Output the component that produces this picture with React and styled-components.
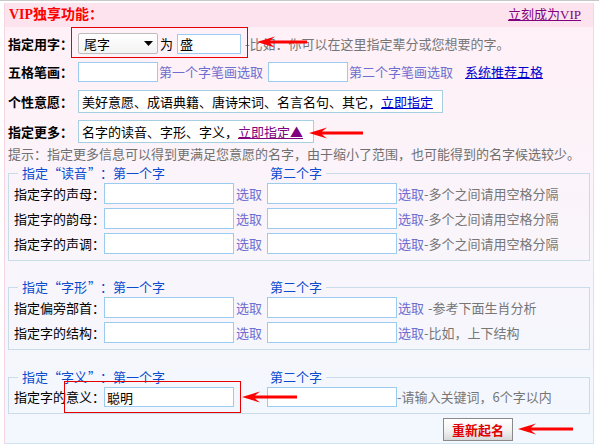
import React from 'react';
import styled, { createGlobalStyle } from 'styled-components';

const Global = createGlobalStyle`
  html, body { margin: 0; padding: 0; background: #fff; }
  body {
    font-family: "Noto Sans CJK SC", "Noto Sans", sans-serif;
    font-size: 13px;
    color: #000;
  }
  * { box-sizing: border-box; }
`;

const TopRule = styled.div`
  height: 1px;
  background: #c8c8c8;
`;

const Panel = styled.div`
  position: relative;
  margin: 2px 0 0 4px;
  width: 590px;
  height: 441px;
  border-left: 1px solid #f6d6e2;
  border-right: 1px solid #f6d6e2;
  border-bottom: 1px solid #cfe5f4;
  background: linear-gradient(180deg, #fff0f6 0%, #fbf4fa 40%, #f2f8fe 100%);
`;

const Header = styled.div`
  display: flex;
  align-items: center;
  justify-content: space-between;
  height: 24px;
  padding: 0 12px 0 4px;
  background: #fde3ed;
`;

const Title = styled.div`
  color: #f00;
  font: bold 14px/16px "Liberation Serif", "Noto Sans CJK SC", serif;
`;

const VipLink = styled.a`
  color: #800080;
  font: 13px/16px "Liberation Serif", "Noto Sans CJK SC", serif;
  text-decoration: underline;
  cursor: pointer;
`;

const TopForm = styled.div`
  padding-left: 3px;
`;

const Row = styled.div`
  display: flex;
  align-items: center;
  height: ${(p) => p.$h}px;
  margin-top: ${(p) => p.$mt}px;
  white-space: nowrap;
`;

const Label = styled.span`
  width: ${(p) => p.$w || 70}px;
  flex: none;
  font-weight: ${(p) => (p.$bold ? 'bold' : 'normal')};
  line-height: 16px;
  white-space: nowrap;
`;

const SelectBox = styled.div`
  display: flex;
  align-items: center;
  justify-content: space-between;
  width: 80px;
  height: 21px;
  padding: 0 4px 0 5px;
  border: 1px solid #bcbcbc;
  border-radius: 2px;
  background: linear-gradient(180deg, #ffffff, #f3f3f3);
  line-height: 16px;
`;

const Plain = styled.span`
  line-height: 16px;
  margin: 0 ${(p) => p.$mr || 0}px 0 ${(p) => p.$ml || 0}px;
`;

const TextInput = styled.input`
  width: ${(p) => p.$w}px;
  height: ${(p) => p.$h || 21}px;
  margin-left: ${(p) => p.$ml || 0}px;
  padding: 0 2px;
  border: 1px solid #9ccbf0;
  background: #fff;
  font: 13px/16px "Noto Sans CJK SC", sans-serif;
  color: #000;
  outline: none;
  flex: none;
`;

const Note = styled.span`
  color: #767676;
  line-height: 16px;
  margin-left: ${(p) => p.$ml || 0}px;
`;

const Pick = styled.a`
  color: #6e6ecf;
  line-height: 16px;
  margin-left: ${(p) => p.$ml || 0}px;
  cursor: pointer;
`;

const Link = styled.a`
  color: ${(p) => (p.$visited ? '#800080' : '#0000cc')};
  text-decoration: underline;
  line-height: 16px;
  margin-left: ${(p) => p.$ml || 0}px;
  cursor: pointer;
`;

const ChoiceBox = styled.div`
  display: flex;
  align-items: center;
  height: 23px;
  padding: 0 ${(p) => p.$pr}px 0 3px;
  border: 1px solid #a6cfe2;
  background: #fff;
  line-height: 16px;
`;

const Hint = styled.div`
  margin-top: 3px;
  line-height: 16px;
  color: #707070;
  white-space: nowrap;
`;

const Group = styled.fieldset`
  margin: ${(p) => p.$mt}px 3px 0 3px;
  padding: 0 0 4px 5px;
  min-width: 0;
  border: 1px solid #c9dcea;
`;

const Legend = styled.legend`
  margin-left: 4px;
  padding: 0 4px;
  color: #0a4bd0;
  line-height: 16px;
  white-space: nowrap;
`;

const LegendFirst = styled.span`
  display: inline-block;
  width: 248px;
`;

const Quote = styled.span`
  display: inline-block;
  width: 13px;
  text-align: ${(p) => (p.$open ? 'right' : 'left')};
  padding: ${(p) => (p.$open ? '0 1px 0 0' : '0 0 0 1px')};
`;

const GroupRow = styled.div`
  display: flex;
  align-items: center;
  height: ${(p) => p.$h || 25}px;
  white-space: nowrap;
`;

const ButtonRow = styled.div`
  display: flex;
  padding-left: 438px;
  margin-top: 4px;
`;

const SubmitButton = styled.button`
  width: 70px;
  height: 23px;
  padding: 0;
  border: 1px solid #8a8a8a;
  background: linear-gradient(180deg, #ffffff 0%, #f2f2f2 55%, #d8d8d8 100%);
  color: #e00000;
  font: bold 13px/16px "Noto Sans CJK SC", sans-serif;
  cursor: pointer;
`;

const Callout = styled.div`
  position: absolute;
  left: ${(p) => p.$x}px;
  top: ${(p) => p.$y}px;
  width: ${(p) => p.$w}px;
  height: ${(p) => p.$h}px;
  border: 1px solid #e80000;
  pointer-events: none;
`;

const ArrowWrap = styled.div`
  position: absolute;
  left: ${(p) => p.$x}px;
  top: ${(p) => p.$y}px;
  width: ${(p) => p.$w}px;
  height: 12px;
  line-height: 0;
  pointer-events: none;
`;

function Arrow({ x, y, w }) {
  return (
    <ArrowWrap $x={x} $y={y} $w={w}>
      <svg width={w} height="12" viewBox={`0 0 ${w} 12`}>
        <polygon
          points={`0,6 18,0.5 13,4.5 ${w},4.5 ${w},7.5 13,7.5 18,11.5`}
          fill="#ff0000"
        />
      </svg>
    </ArrowWrap>
  );
}

function Caret() {
  return (
    <svg width="9" height="5" viewBox="0 0 9 5">
      <polygon points="0,0 9,0 4.5,5" fill="#000" />
    </svg>
  );
}

const groups = [
  {
    word: '读音',
    mt: 3,
    rows: [
      { label: '指定字的声母：', pick: true, note: '-多个之间请用空格分隔' },
      { label: '指定字的韵母：', pick: true, note: '-多个之间请用空格分隔' },
      { label: '指定字的声调：', pick: true, note: '-多个之间请用空格分隔' },
    ],
  },
  {
    word: '字形',
    mt: 18,
    rows: [
      { label: '指定偏旁部首：', pick: true, note: '-参考下面生肖分析', gap: 4 },
      { label: '指定字的结构：', pick: true, note: '-比如，上下结构' },
    ],
  },
  {
    word: '字义',
    mt: 19,
    rows: [
      { label: '指定字的意义：', pick: false, value: '聪明', note: '-请输入关键词，6个字以内', h: 24, ih: 20 },
    ],
  },
];

export default function App() {
  return (
    <>
      <Global />
      <TopRule />
      <Panel>
        <Header>
          <Title>VIP独享功能：</Title>
          <VipLink>立刻成为VIP</VipLink>
        </Header>

        <TopForm>
          <Row $h={21} $mt={6}>
            <Label $bold>指定用字：</Label>
            <SelectBox>
              <span>尾字</span>
              <Caret />
            </SelectBox>
            <Plain $ml={2} $mr={4}>为</Plain>
            <TextInput $w={64} $h={20} defaultValue="盛" />
            <Note $ml={4}>-比如：你可以在这里指定辈分或您想要的字。</Note>
          </Row>

          <Row $h={20} $mt={8}>
            <Label $bold>五格笔画：</Label>
            <TextInput $w={80} $h={20} />
            <Pick $ml={1}>第一个字笔画选取</Pick>
            <TextInput $w={80} $h={20} $ml={5} />
            <Pick $ml={1}>第二个字笔画选取</Pick>
            <Link $ml={12}>系统推荐五格</Link>
          </Row>

          <Row $h={23} $mt={8}>
            <Label $bold>个性意愿：</Label>
            <ChoiceBox $pr={9}>
              美好意愿、成语典籍、唐诗宋词、名言名句、其它，
              <Link>立即指定</Link>
            </ChoiceBox>
          </Row>

          <Row $h={23} $mt={7}>
            <Label $bold>指定更多：</Label>
            <ChoiceBox $pr={10}>
              名字的读音、字形、字义，
              <Link $visited>立即指定▲</Link>
            </ChoiceBox>
          </Row>

          <Hint>提示：指定更多信息可以得到更满足您意愿的名字，由于缩小了范围，也可能得到的名字候选较少。</Hint>
        </TopForm>

        {groups.map((g) => (
          <Group key={g.word} $mt={g.mt}>
            <Legend>
              <LegendFirst>
                指定<Quote $open>“</Quote>{g.word}<Quote>”</Quote>：第一个字
              </LegendFirst>
              第二个字
            </Legend>
            {g.rows.map((r) => (
              <GroupRow key={r.label} $h={r.h}>
                <Label $w={90}>{r.label}</Label>
                <TextInput $w={130} $h={r.ih} defaultValue={r.value} />
                {r.pick ? <Pick $ml={2}>选取</Pick> : <Plain $mr={26} $ml={2} />}
                <TextInput $w={130} $h={r.ih} $ml={5} />
                {r.pick && <Pick $ml={1}>选取</Pick>}
                <Note $ml={r.gap || 0}>{r.note}</Note>
              </GroupRow>
            ))}
          </Group>
        ))}

        <ButtonRow>
          <SubmitButton type="button">重新起名</SubmitButton>
        </ButtonRow>

        <Callout $x={66} $y={24} $w={177} $h={31} />
        <Callout $x={59} $y={378} $w={177} $h={32} />
        <Arrow x={252} y={33} w={50} />
        <Arrow x={304} y={124} w={54} />
        <Arrow x={237} y={388} w={55} />
        <Arrow x={513} y={420} w={55} />
      </Panel>
    </>
  );
}
